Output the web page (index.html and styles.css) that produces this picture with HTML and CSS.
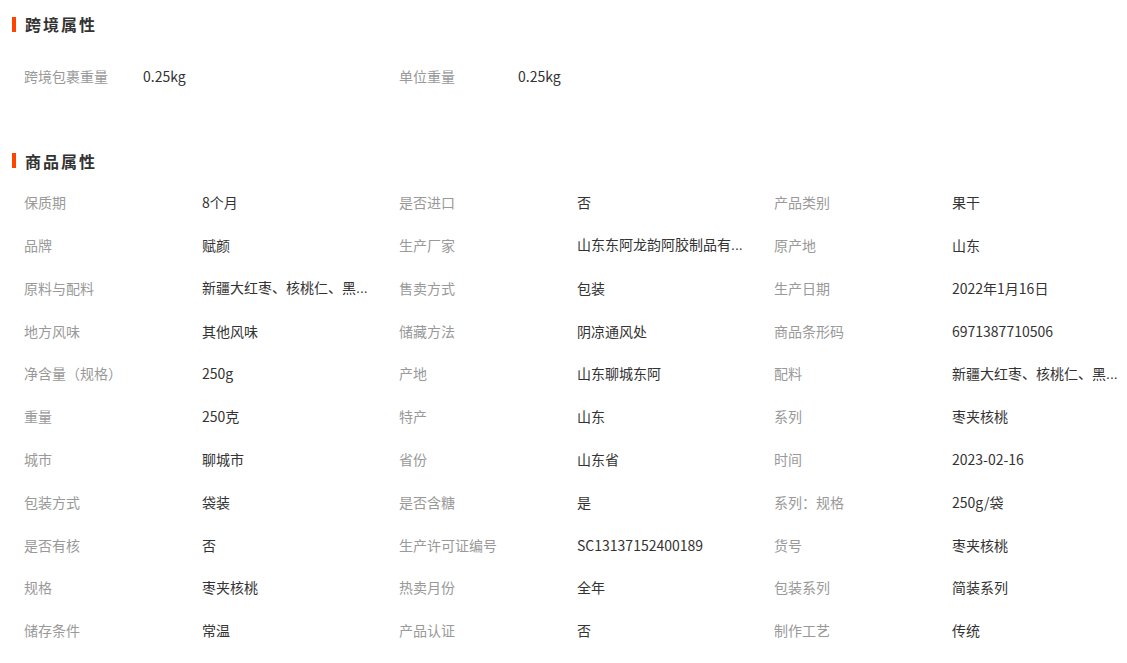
FILE: index.html
```html
<!DOCTYPE html>
<html lang="zh-CN">
<head>
<meta charset="utf-8">
<title>商品属性</title>
<link rel="stylesheet" href="styles.css">
</head>
<body>
<section class="section first">
  <h2 class="title"><span class="bar"></span>跨境属性</h2>
  <div class="grid cross">
    <div class="item"><span class="label">跨境包裹重量</span><span class="value">0.25kg</span></div>
    <div class="item"><span class="label">单位重量</span><span class="value">0.25kg</span></div>
  </div>
</section>
<section class="section second">
  <h2 class="title"><span class="bar"></span>商品属性</h2>
  <div class="grid props">
    <div class="item"><span class="label">保质期</span><span class="value">8个月</span></div>
    <div class="item"><span class="label">是否进口</span><span class="value">否</span></div>
    <div class="item"><span class="label">产品类别</span><span class="value">果干</span></div>
    <div class="item"><span class="label">品牌</span><span class="value">赋颜</span></div>
    <div class="item"><span class="label">生产厂家</span><span class="value">山东东阿龙韵阿胶制品有<span class="dots">...</span></span></div>
    <div class="item"><span class="label">原产地</span><span class="value">山东</span></div>
    <div class="item"><span class="label">原料与配料</span><span class="value">新疆大红枣、核桃仁、黑<span class="dots">...</span></span></div>
    <div class="item"><span class="label">售卖方式</span><span class="value">包装</span></div>
    <div class="item"><span class="label">生产日期</span><span class="value">2022年1月16日</span></div>
    <div class="item"><span class="label">地方风味</span><span class="value">其他风味</span></div>
    <div class="item"><span class="label">储藏方法</span><span class="value">阴凉通风处</span></div>
    <div class="item"><span class="label">商品条形码</span><span class="value">6971387710506</span></div>
    <div class="item"><span class="label">净含量（规格）</span><span class="value">250g</span></div>
    <div class="item"><span class="label">产地</span><span class="value">山东聊城东阿</span></div>
    <div class="item"><span class="label">配料</span><span class="value">新疆大红枣、核桃仁、黑<span class="dots">...</span></span></div>
    <div class="item"><span class="label">重量</span><span class="value">250克</span></div>
    <div class="item"><span class="label">特产</span><span class="value">山东</span></div>
    <div class="item"><span class="label">系列</span><span class="value">枣夹核桃</span></div>
    <div class="item"><span class="label">城市</span><span class="value">聊城市</span></div>
    <div class="item"><span class="label">省份</span><span class="value">山东省</span></div>
    <div class="item"><span class="label">时间</span><span class="value">2023-02-16</span></div>
    <div class="item"><span class="label">包装方式</span><span class="value">袋装</span></div>
    <div class="item"><span class="label">是否含糖</span><span class="value">是</span></div>
    <div class="item"><span class="label">系列：规格</span><span class="value">250g/袋</span></div>
    <div class="item"><span class="label">是否有核</span><span class="value">否</span></div>
    <div class="item"><span class="label">生产许可证编号</span><span class="value">SC13137152400189</span></div>
    <div class="item"><span class="label">货号</span><span class="value">枣夹核桃</span></div>
    <div class="item"><span class="label">规格</span><span class="value">枣夹核桃</span></div>
    <div class="item"><span class="label">热卖月份</span><span class="value">全年</span></div>
    <div class="item"><span class="label">包装系列</span><span class="value">简装系列</span></div>
    <div class="item"><span class="label">储存条件</span><span class="value">常温</span></div>
    <div class="item"><span class="label">产品认证</span><span class="value">否</span></div>
    <div class="item"><span class="label">制作工艺</span><span class="value">传统</span></div>
  </div>
</section>
</body>
</html>
```
FILE: styles.css
```css
html, body {
  margin: 0;
  padding: 0;
  background: #fff;
}
body {
  font-family: "Noto Sans CJK SC", "Noto Sans", sans-serif;
  font-size: 14px;
  color: #333;
  width: 1127px;
  overflow: hidden;
}
.section.first {
  margin-top: 4px;
}
.section.second {
  margin-top: 43px;
}
.title {
  margin: 0;
  height: 40px;
  display: flex;
  align-items: center;
  padding-left: 12px;
  font-size: 16px;
  font-weight: bold;
  letter-spacing: 2px;
  color: #333;
}
.bar {
  display: inline-block;
  width: 4px;
  height: 15px;
  background: #ff4400;
  margin-right: 9px;
}
.grid {
  display: grid;
  grid-template-columns: repeat(3, 375px);
  padding-left: 24px;
  grid-auto-rows: 42.8px;
}
.cross {
  margin-top: 11px;
}
.item {
  display: flex;
  align-items: center;
  line-height: 20px;
  white-space: nowrap;
}
.label {
  color: #999;
  width: 178px;
  flex: none;
}
.cross .label {
  width: 119px;
}
.value {
  color: #333;
}
.dots {
  font-family: "Liberation Sans", sans-serif;
  letter-spacing: 0;
}
```
